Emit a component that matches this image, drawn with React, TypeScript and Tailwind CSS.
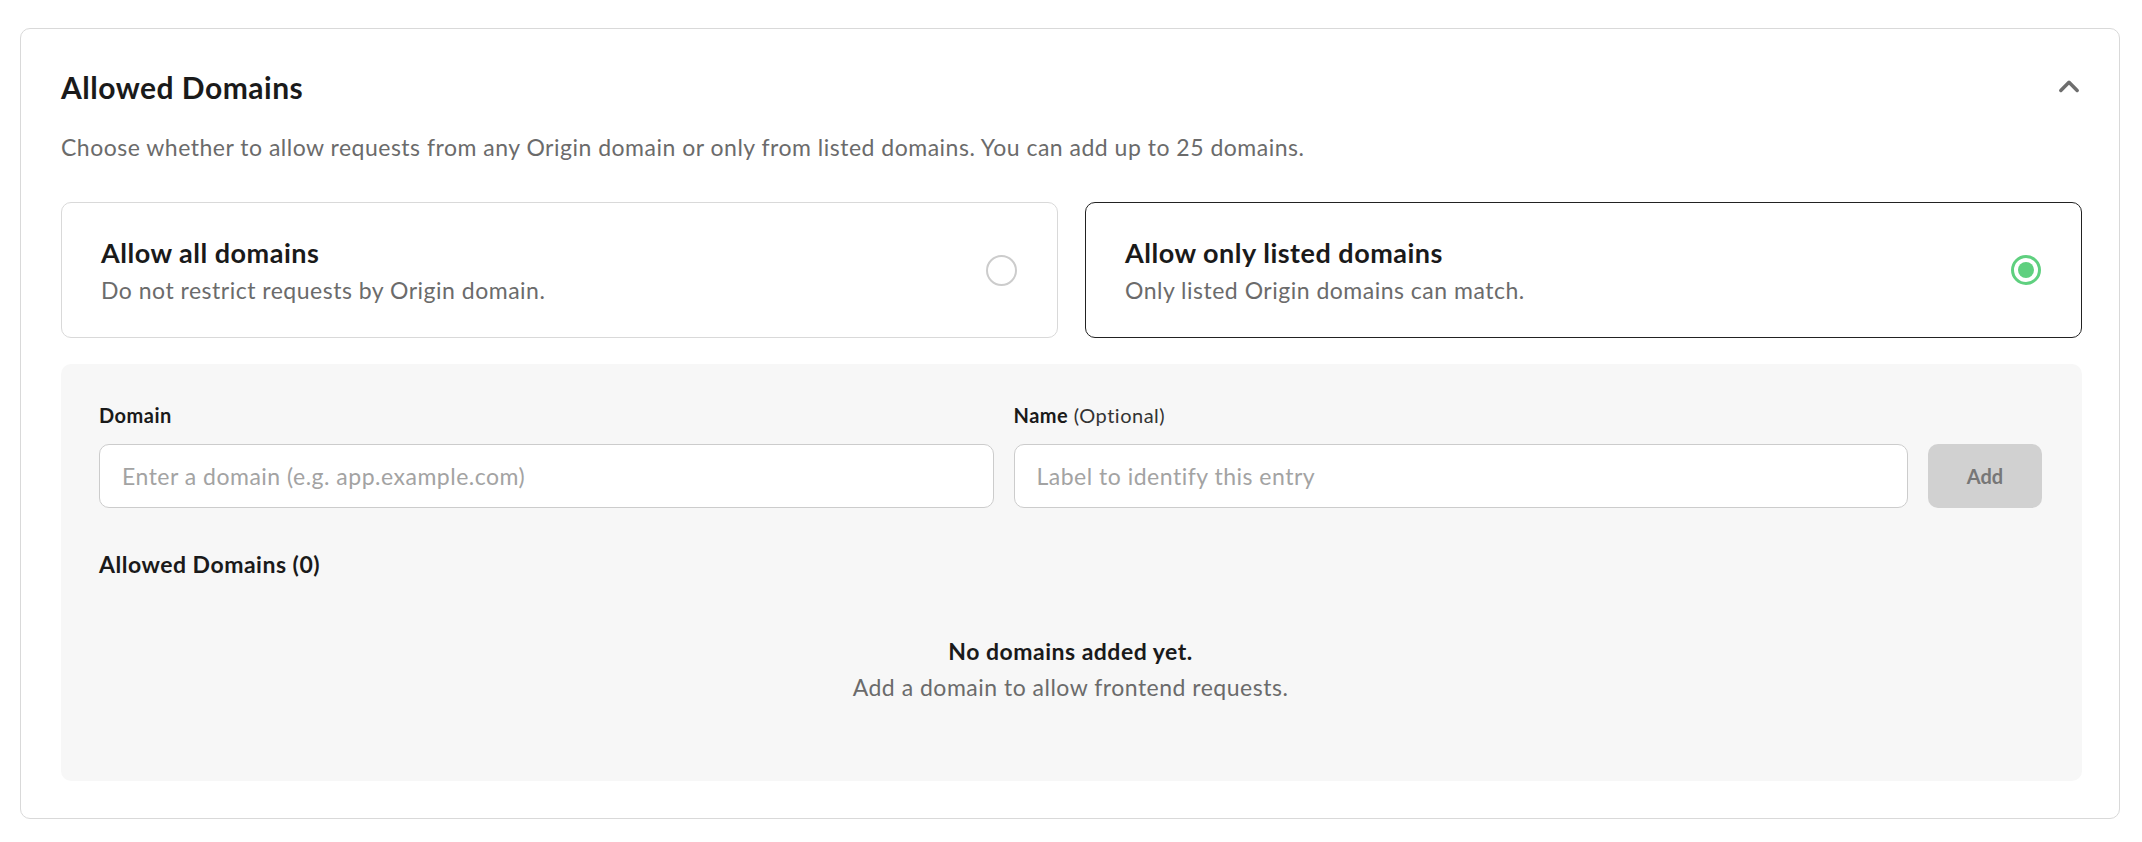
import { useState } from 'react';

export default function App() {
  const [mode, setMode] = useState<'all' | 'listed'>('listed');
  const [domain, setDomain] = useState('');
  const [name, setName] = useState('');

  const options = [
    { id: 'all' as const, title: 'Allow all domains', desc: 'Do not restrict requests by Origin domain.' },
    { id: 'listed' as const, title: 'Allow only listed domains', desc: 'Only listed Origin domains can match.' },
  ];

  return (
    <div className="min-h-screen bg-white pt-[28px] pl-[20px] pr-[22px] font-['Lato','Noto_Sans',sans-serif] text-[#1a1a1a]">
      <section className="border border-[#d9d9d9] rounded-[10px] pl-[40px] pr-[37px] pt-[35px] pb-[37px]">
        {/* header */}
        <div className="flex items-center justify-between">
          <h2 className="text-[30px] leading-[46px] font-bold tracking-[0.5px]">Allowed Domains</h2>
          <button className="text-[#6e6e6e] mr-[-1px]">
            <svg width="28" height="28" viewBox="0 0 24 24" fill="none" stroke="currentColor" strokeWidth="3" strokeLinecap="round" strokeLinejoin="round">
              <path d="M5 15l7-7 7 7" />
            </svg>
          </button>
        </div>
        <p className="mt-[20px] text-[23px] leading-[34px] tracking-[0.5px] text-[#6b6b6b]">
          Choose whether to allow requests from any Origin domain or only from listed domains. You can add up to 25 domains.
        </p>

        {/* options */}
        <div className="grid grid-cols-2 gap-[27px] mt-[38px]">
          {options.map((o) => {
            const active = mode === o.id;
            return (
              <button
                key={o.id}
                onClick={() => setMode(o.id)}
                className={`h-[136px] flex items-center justify-between text-left rounded-[10px] border pl-[39px] pr-[40px] bg-white ${active ? 'border-[#222222]' : 'border-[#d9d9d9]'}`}
              >
                <div>
                  <div className="text-[27px] leading-[34px] tracking-[0.5px] font-bold">{o.title}</div>
                  <div className="text-[23px] leading-[30px] tracking-[0.5px] text-[#6b6b6b] mt-[5px]">{o.desc}</div>
                </div>
                {active ? (
                  <span className="w-[30px] h-[30px] rounded-full border-[3px] border-[#5fd07f] flex items-center justify-center">
                    <span className="w-[16px] h-[16px] rounded-full bg-[#5fd07f]" />
                  </span>
                ) : (
                  <span className="w-[31px] h-[31px] rounded-full border-[2.5px] border-[#cccccc]" />
                )}
              </button>
            );
          })}
        </div>

        {/* domain list panel */}
        <div className="mt-[26px] bg-[#f7f7f7] rounded-[10px] pl-[38px] pr-[40px] pt-[38px] pb-[79px]">
          <div className="flex items-end gap-[20px]">
            <label className="flex-1">
              <div className="text-[20px] leading-[26px] tracking-[0.5px] font-bold mb-[16px]">Domain</div>
              <input
                value={domain}
                onChange={(e) => setDomain(e.target.value)}
                placeholder="Enter a domain (e.g. app.example.com)"
                className="w-full h-[64px] rounded-[10px] border border-[#cccccc] bg-white px-[22px] text-[23px] tracking-[0.5px] text-[#1a1a1a] placeholder-[#a3a3a3] outline-none"
              />
            </label>
            <label className="flex-1">
              <div className="text-[20px] leading-[26px] tracking-[0.5px] mb-[16px]">
                <span className="font-bold">Name</span> <span className="text-[#333]">(Optional)</span>
              </div>
              <input
                value={name}
                onChange={(e) => setName(e.target.value)}
                placeholder="Label to identify this entry"
                className="w-full h-[64px] rounded-[10px] border border-[#cccccc] bg-white px-[22px] text-[23px] tracking-[0.5px] text-[#1a1a1a] placeholder-[#a3a3a3] outline-none"
              />
            </label>
            <button disabled className="w-[114px] h-[64px] rounded-[10px] bg-[#d1d1d1] text-[#777777] text-[20px] font-bold">
              Add
            </button>
          </div>

          <h3 className="mt-[41px] text-[23px] leading-[30px] tracking-[0.5px] font-bold">Allowed Domains (0)</h3>

          <div className="mt-[57px] flex flex-col items-center">
            <div className="text-[23px] leading-[30px] tracking-[0.5px] font-bold">No domains added yet.</div>
            <div className="text-[23px] leading-[30px] tracking-[0.5px] text-[#6b6b6b] mt-[6px]">Add a domain to allow frontend requests.</div>
          </div>
        </div>
      </section>
    </div>
  );
}
